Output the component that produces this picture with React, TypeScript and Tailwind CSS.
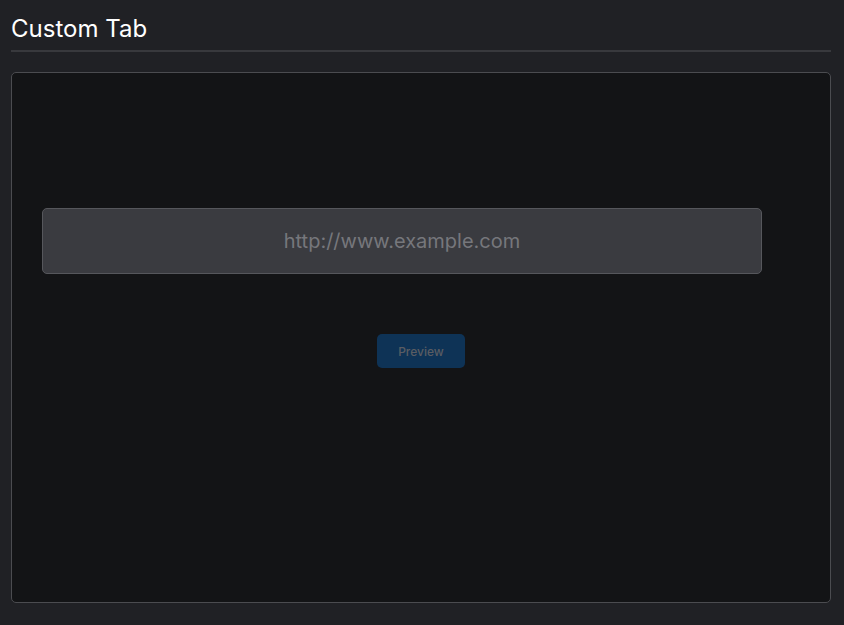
export default function App() {
  return (
    <div
      className="min-h-[625px] bg-[#202125] pl-[11px] pr-[13px] pt-[13px] pb-[22px] flex flex-col"
      style={{ fontFamily: "Inter, 'Noto Sans', sans-serif" }}
    >
      <h1 className="text-[24px] leading-[32px] text-white font-normal">Custom Tab</h1>
      <div className="mt-[5px] h-[2px] bg-[#38393d]" />
      <div className="mt-[20px] h-[531px] rounded-[5px] border border-[#4b4c50] bg-[#131416] flex flex-col pt-[135px]">
        <div className="pl-[30px]">
          <input
            placeholder="http://www.example.com"
            className="w-[720px] h-[66px] rounded-[5px] border border-[#56575c] bg-[#3a3b40] text-center text-[20px] text-white placeholder:text-[#76777c] outline-none"
          />
        </div>
        <div className="mt-[60px] flex justify-center">
          <button className="w-[88px] h-[34px] rounded-[5px] bg-[#0e3356] text-[12px] font-medium leading-[36px] text-[#5a5d63]">
            Preview
          </button>
        </div>
      </div>
    </div>
  );
}
